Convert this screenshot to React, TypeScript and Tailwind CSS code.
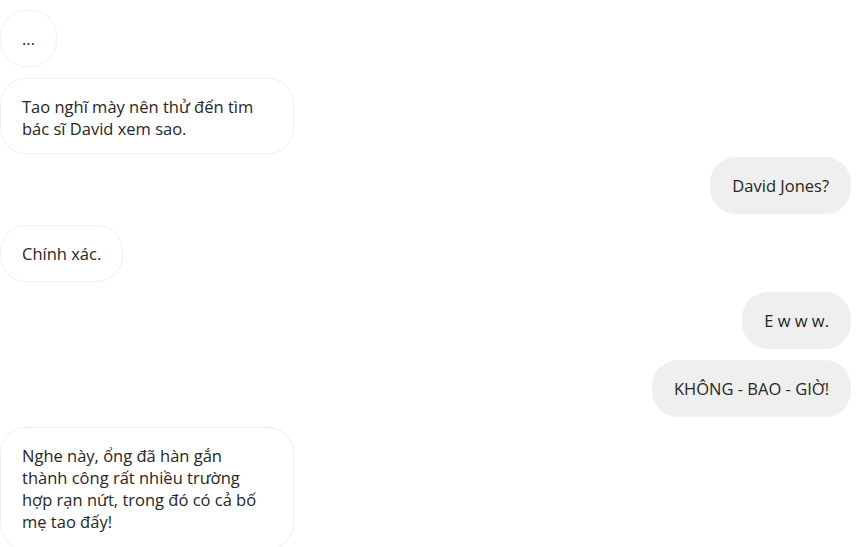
import React from 'react';

type Msg = { id: number; text: string; mine: boolean; space: string };

const messages: Msg[] = [
  { id: 1, text: '...', mine: false, space: 'mt-[10px]' },
  { id: 2, text: 'Tao nghĩ mày nên thử đến tìm\nbác sĩ David xem sao.', mine: false, space: 'mt-[11px] h-[76px] overflow-hidden' },
  { id: 3, text: 'David Jones?', mine: true, space: 'mt-[3px]' },
  { id: 4, text: 'Chính xác.', mine: false, space: 'mt-[11px]' },
  { id: 5, text: 'E w w w.', mine: true, space: 'mt-[10px]' },
  { id: 6, text: 'KHÔNG - BAO - GIỜ!', mine: true, space: 'mt-[11px]' },
  { id: 7, text: 'Nghe này, ổng đã hàn gắn\nthành công rất nhiều trường\nhợp rạn nứt, trong đó có cả bố\nmẹ tao đấy!', mine: false, space: 'mt-[10px]' },
];

const App: React.FC = () => {
  return (
    <div className="w-[856px] h-[547px] overflow-hidden bg-white pr-[5px] flex flex-col font-['Open_Sans',sans-serif] text-[16.5px] leading-[22px] text-[#262626]">
      {messages.map(m => (
        <div key={m.id} className={`flex shrink-0 ${m.mine ? 'justify-end' : 'justify-start'} ${m.space}`}>
          {m.mine ? (
            <div className="bg-[#efefef] rounded-[26px] px-[22px] py-[17.5px] max-w-[294px]">
              {m.text}
            </div>
          ) : (
            <div className={`bg-white border border-[#efefef] rounded-[26px] px-[21px] py-[16.5px] whitespace-pre-line ${m.text.includes('\n') ? 'w-[294px]' : ''}`}>
              {m.text}
            </div>
          )}
        </div>
      ))}
    </div>
  );
};

export default App;
